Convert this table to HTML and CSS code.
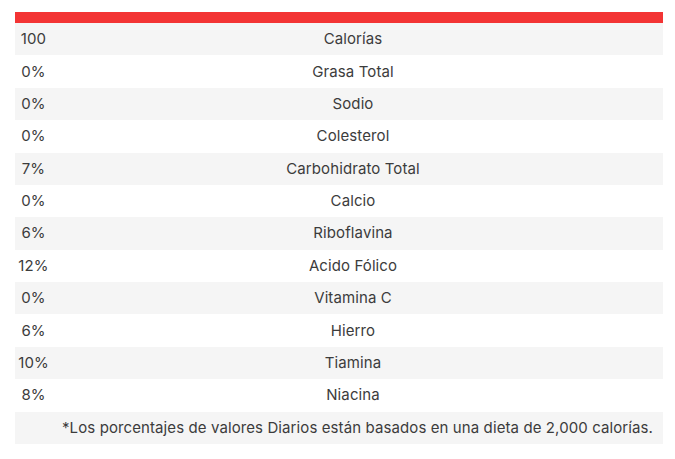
FILE: index.html
```html
<!DOCTYPE html>
<html lang="es">
<head>
<meta charset="utf-8">
<link rel="stylesheet" href="styles.css">
</head>
<body>
<div class="wrap">
<table class="nutri">
  <thead>
    <tr class="head"><th></th><th></th></tr>
  </thead>
  <tbody>
    <tr><td class="pct">100</td><td class="name">Calorías</td></tr>
    <tr><td class="pct">0%</td><td class="name">Grasa Total</td></tr>
    <tr><td class="pct">0%</td><td class="name">Sodio</td></tr>
    <tr><td class="pct">0%</td><td class="name">Colesterol</td></tr>
    <tr><td class="pct">7%</td><td class="name">Carbohidrato Total</td></tr>
    <tr><td class="pct">0%</td><td class="name">Calcio</td></tr>
    <tr><td class="pct">6%</td><td class="name">Riboflavina</td></tr>
    <tr><td class="pct">12%</td><td class="name">Acido Fólico</td></tr>
    <tr><td class="pct">0%</td><td class="name">Vitamina C</td></tr>
    <tr><td class="pct">6%</td><td class="name">Hierro</td></tr>
    <tr><td class="pct">10%</td><td class="name">Tiamina</td></tr>
    <tr><td class="pct">8%</td><td class="name">Niacina</td></tr>
    <tr><td class="pct"></td><td class="name note">*Los porcentajes de valores Diarios están basados en una dieta de 2,000 calorías.</td></tr>
  </tbody>
</table>
</div>
</body>
</html>
```
FILE: styles.css
```css
html, body {
  margin: 0;
  padding: 0;
  background: #ffffff;
}
body {
  font-family: Inter, "Noto Sans", sans-serif;
  font-size: 15px;
  letter-spacing: 0.1px;
  color: #3c3c3c;
}
.wrap {
  padding: 12px 12px 0 15px;
}
.nutri {
  width: 648px;
  border-collapse: collapse;
  table-layout: fixed;
}
.nutri .head th {
  background: #f33434;
  height: 11px;
  padding: 0;
}
.nutri .head th:first-child {
  width: 37px;
}
.nutri td {
  padding: 6.2px 0;
  line-height: 20px;
  text-align: center;
  white-space: nowrap;
}
.nutri tbody tr:nth-child(odd) td {
  background: #f5f5f5;
}
.nutri tbody tr:nth-child(even) td {
  background: #ffffff;
}
.nutri td.name {
  padding-right: 9px;
}
.nutri td.note {
  padding-right: 0;
}
```
